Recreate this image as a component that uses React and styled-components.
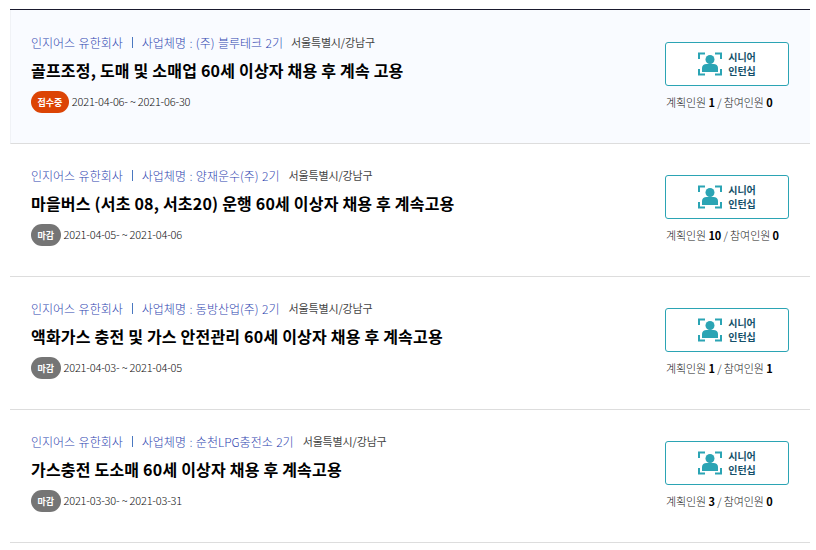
import React from "react";
import styled, { createGlobalStyle } from "styled-components";

const GlobalStyle = createGlobalStyle`
  body {
    margin: 0;
    background: #fff;
    font-family: "Noto Sans CJK KR", "Noto Sans", sans-serif;
  }
`;

const List = styled.ul`
  list-style: none;
  margin: 9px 0 0 10px;
  padding: 0;
  width: 800px;
  border-top: 1px solid #1a1a2e;
`;

const Row = styled.li`
  box-sizing: border-box;
  height: ${(p) => (p.$active ? "134px" : "133px")};
  display: flex;
  justify-content: space-between;
  padding: ${(p) => (p.$active ? "24px 21px 0 20px" : "23px 21px 0 21px")};
  background: ${(p) => (p.$active ? "#f9fbff" : "#fff")};
  border-bottom: 1px solid #ddd;
  border-left: ${(p) => (p.$active ? "1px solid #f0f2f6" : "none")};
`;

const Info = styled.div`
  display: flex;
  flex-direction: column;
`;

const Meta = styled.div`
  display: flex;
  align-items: center;
  height: 16px;
  font-size: 12px;
  font-weight: 300;
  word-spacing: 0.8px;
  color: #2f46b0;
`;

const Bar = styled.span`
  width: 1px;
  height: 11px;
  margin: 0 9px;
  background: #4a78c0;
`;

const Region = styled.span`
  margin-left: ${(p) => (p.$tight ? "8px" : "9px")};
  font-size: 11px;
  font-weight: 400;
  word-spacing: 0;
  letter-spacing: -0.15px;
  color: #444;
`;

const Title = styled.h3`
  margin: 7px 0 0;
  height: 26px;
  line-height: 26px;
  font-size: 16px;
  font-weight: 700;
  letter-spacing: 0.2px;
  color: #000;
`;

const Period = styled.div`
  display: flex;
  align-items: center;
  gap: 3px;
  margin-top: 8px;
  font-size: 11px;
  font-weight: 300;
  letter-spacing: -0.2px;
  color: #111;
`;

const DateText = styled.span`
  padding-bottom: 3px;
`;

const Badge = styled.span`
  display: flex;
  align-items: center;
  justify-content: center;
  height: 22px;
  padding: 0 6.5px;
  border-radius: 11px;
  font-size: 9px;
  font-weight: 700;
  letter-spacing: 0;
  color: #fff;
  background: ${(p) => (p.$open ? "#dc4405" : "#757575")};
`;

const Side = styled.div`
  display: flex;
  flex-direction: column;
  width: 124px;
  margin-top: 8px;
`;

const InternButton = styled.button`
  box-sizing: border-box;
  display: flex;
  align-items: center;
  justify-content: center;
  gap: 6px;
  width: 124px;
  height: 44px;
  padding: 0;
  background: #fff;
  border: 1px solid #2ba4b4;
  border-radius: 3px;
  font-family: inherit;
`;

const ButtonLabel = styled.span`
  font-size: 10px;
  font-weight: 700;
  line-height: 14px;
  color: #14506a;
  text-align: left;
`;

const Counts = styled.div`
  margin-top: 8px;
  padding-left: 1px;
  font-size: 11px;
  font-weight: 300;
  letter-spacing: -0.1px;
  line-height: 16px;
  color: #222;
  white-space: nowrap;
  b {
    font-weight: 700;
    color: #000;
  }
`;

const SeniorIcon = () => (
  <svg width="24" height="24" viewBox="0 0 24 24" fill="none">
    <path
      d="M1 7V1.500H7M17 1.500H23V7M1 17V22.500H7M17 22.500H23V17"
      stroke="#2ba4b4"
      strokeWidth="2"
    />
    <circle cx="12" cy="7.500" r="4.500" fill="#2ba4b4" />
    <path d="M4 20v-4c0-2.500 2-4 4.500-4h7c2.500 0 4.500 1.500 4.500 4v4z" fill="#2ba4b4" />
  </svg>
);

const jobs = [
  {
    biz: "(주) 블루테크 2기",
    title: "골프조정, 도매 및 소매업 60세 이상자 채용 후 계속 고용",
    period: "2021-04-06- ~ 2021-06-30",
    open: true,
    plan: 1,
    join: 0,
  },
  {
    biz: "양재운수(주) 2기",
    title: "마을버스 (서초 08, 서초20) 운행 60세 이상자 채용 후 계속고용",
    period: "2021-04-05- ~ 2021-04-06",
    plan: 10,
    join: 0,
  },
  {
    biz: "동방산업(주) 2기",
    title: "액화가스 충전 및 가스 안전관리 60세 이상자 채용 후 계속고용",
    period: "2021-04-03- ~ 2021-04-05",
    plan: 1,
    join: 1,
  },
  {
    biz: "순천LPG충전소 2기",
    title: "가스충전 도소매 60세 이상자 채용 후 계속고용",
    period: "2021-03-30- ~ 2021-03-31",
    plan: 3,
    join: 0,
  },
];

const App = () => {
  return (
    <>
      <GlobalStyle />
      <List>
        {jobs.map((job) => (
          <Row key={job.biz} $active={job.open}>
            <Info>
              <Meta>
                인지어스 유한회사
                <Bar />
                사업체명 : {job.biz}
                <Region $tight={job.open}>서울특별시/강남구</Region>
              </Meta>
              <Title>{job.title}</Title>
              <Period>
                <Badge $open={job.open}>{job.open ? "접수중" : "마감"}</Badge>
                <DateText>{job.period}</DateText>
              </Period>
            </Info>
            <Side>
              <InternButton>
                <SeniorIcon />
                <ButtonLabel>
                  시니어
                  <br />
                  인턴십
                </ButtonLabel>
              </InternButton>
              <Counts>
                계획인원 <b>{job.plan}</b> / 참여인원 <b>{job.join}</b>
              </Counts>
            </Side>
          </Row>
        ))}
      </List>
    </>
  );
};

export default App;
